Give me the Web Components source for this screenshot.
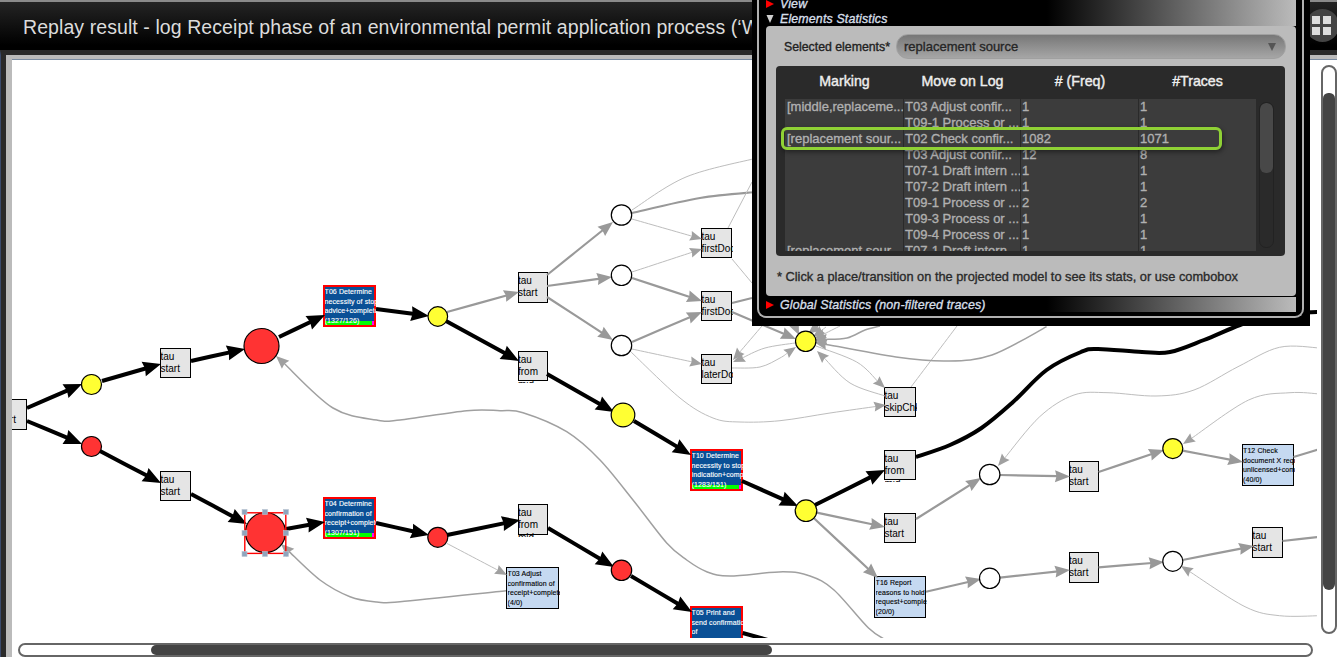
<!DOCTYPE html>
<html lang="en"><head><meta charset="utf-8"><title>Replay result</title>
<style>
html,body{margin:0;height:100%;overflow:hidden;background:#000;font-family:"Liberation Sans",Arial,sans-serif}
</style></head><body>
<replay-app></replay-app>
<script>
const OX=12,OY=60;
/* ---------- diagram data, page coordinates ---------- */
const TRANS=[
 [-4,27,399,430,['tau','start'],'tau'],
 [160,191,348,378,['tau','start'],'tau'],[160,191,471,501,['tau','start'],'tau'],
 [517.5,547.5,272,303,['tau','start'],'tau'],[517.5,547.5,351,381,['tau','from','mid'],'tau'],
 [517.5,547.5,504,535,['tau','from','mid'],'tau'],
 [701,732,228,258,['tau','firstDoc'],'tau'],[701,732,291,321,['tau','firstDoc'],'tau'],[701,732,354,384,['tau','laterDoc'],'tau'],
 [884,916,387,417,['tau','skipChk'],'tau'],[884,916,450,480,['tau','from','mid'],'tau'],[884,916,513,543,['tau','start'],'tau'],
 [1068.5,1099,461,492,['tau','start'],'tau'],[1068.5,1099,552,583,['tau','start'],'tau'],[1252,1283,527,558,['tau','start'],'tau'],
 [323,376,285,327,['T06 Determine','necessity of stopping','advice+complete','(1327/126)'],'hot'],
 [323,376,497,539,['T04 Determine','confirmation of','receipt+complete','(1307/151)'],'hot'],
 [690,743,449,491,['T10 Determine','necessity to stop','indication+complete','(1283/151)'],'hot'],
 [690,743,606,648,['T05 Print and','send confirmation','of','receipt+complete'],'hot'],
 [506,559,567,609,['T03 Adjust','confirmation of','receipt+complete','(4/0)'],'cold'],
 [874,926,576,618,['T16 Report','reasons to hold','request+complete','(20/0)'],'cold'],
 [1241.5,1294,444,486,['T12 Check','document X request','unlicensed+complete','(40/0)'],'cold'],
];
const Y='#ffff33',R='#ff3333',W='#ffffff';
const PLACES=[
 [91.5,384.5,10,Y],[91.5,446.5,10,R],[261.5,346,17.5,R],[265.5,532.5,20,R],
 [437.8,316.5,9.8,Y],[437.8,537.3,10,R],[621.5,215,10.2,W],[621.5,275.3,10.2,W],[621.5,345.5,10.2,W],
 [623,415,11.8,Y],[621.5,570.3,10.2,R],[805.7,341.3,10.2,Y],[806,510.7,10.8,Y],
 [989.7,474.5,10.2,W],[989.7,578.3,10.2,W],[1172.8,448.6,10,Y],[1172.8,561.3,10,W],
];
const B='b',M='m',N='n',C='c';
/* [kind, arrow?, points] */
const EDGES=[
 [B,1,[[27,408],[82,384]]],[B,1,[[27,421],[82,444]]],[B,1,[[102,381],[161,364]]],[B,1,[[100,451],[161,483]]],
 [B,1,[[191,361],[245,349]]],[B,1,[[191,494],[247,524]]],[B,1,[[279,337],[325,315]]],[B,1,[[286,529],[325,522]]],
 [B,1,[[376,309],[429,316]]],[B,1,[[376,523],[429,535]]],[B,1,[[446,321],[519,361]]],[B,1,[[447,535],[520,520]]],
 [B,1,[[547,374],[614,412]]],[B,1,[[548,528],[614,567]]],[B,1,[[634,421],[691,455]]],[B,1,[[631,576],[692,612]]],
 [B,1,[[742,481],[798,506]]],[B,0,[[742.7,633],[775,642]]],[B,1,[[815,505],[885,470]]],
 [B,0,[[916,457],[950,445],[981.5,428],[1012,403],[1046.6,370],[1081,352],[1098,349],[1142,352],[1170,352],[1204,340],[1240,325],[1275,314],[1320,312]]],
 [M,1,[[447,312],[519,292]]],[M,1,[[547,275],[613,222]]],[M,1,[[547,286],[612,277]]],[M,1,[[547,297],[613,340]]],
 [M,0,[[632,213],[700,198],[757,192]]],[N,0,[[632,210],[686,177],[757,158]]],
 [N,1,[[632,219],[702,239]]],[N,1,[[632,272],[702,249]]],[M,1,[[632,278],[702,301]]],[M,1,[[632,342],[702,312]]],[N,1,[[632,349],[702,364]]],
 [N,1,[[630,351],[680,398],[713,418],[740,422],[780,420.7],[830,413],[886,405]]],
 [N,0,[[732,259],[752,283]]],[N,0,[[728,228],[752,182]]],[M,0,[[732,303],[752,298]]],
 [M,1,[[732,312],[796,339]]],[N,1,[[795,343],[765,348],[733,362]]],[N,1,[[732,368],[760,367],[780,358],[796,347]]],
 [N,1,[[762,326],[733,360]]],
 [N,1,[[816,346],[856.7,362],[885,388]]],[N,1,[[885,396],[850,383],[817,351]]],[N,0,[[911,387],[957,326]]],
 [C,1,[[1046.6,326.7],[992,355],[947,361],[896,357],[814,342]]],
 [C,1,[[880,326],[865,330],[847,338],[814,340]]],
 [N,1,[[826,327],[813,337]]],[N,1,[[840,326],[814,339]]],[C,1,[[795,326],[799,335]]],[C,1,[[818,326],[808,334]]],
 [M,1,[[816.8,512.7],[885,527]]],[M,1,[[813.7,518],[878,578]]],[M,1,[[916,519],[981,478]]],[M,1,[[1000,475],[1070,476.5]]],
 [M,1,[[1098.6,472],[1164,450]]],[M,1,[[1182.5,450.7],[1243,462]]],[M,0,[[1293.5,457],[1320,449]]],
 [N,1,[[1320,394],[1290,392.7],[1248.6,400],[1183,444]]],
 [N,1,[[1320,348],[1279.5,347.3],[1238,366.7],[1194,390],[1156,396],[1108,392.7],[1074,395],[1039.7,416.7],[998,466]]],
 [M,1,[[926,591.7],[981,579]]],[M,1,[[1000,577.7],[1070,570]]],[M,1,[[1098.6,567.3],[1164,562]]],[M,1,[[1182.5,560],[1254,546]]],[M,0,[[1282.5,541],[1320,536.7]]],
 [N,1,[[1320,615.7],[1279.5,615.7],[1245,606.7],[1181,566]]],
 [C,1,[[886,640],[868.5,628],[834,590],[810,576],[783,571.7],[730,576],[706.7,571.7],[686.7,560],[666.7,543],[633,500],[600,460],[566.7,431.7],[523,412.7],[500,410.7],[466.7,410.7],[400,420],[376.7,420],[333,408],[276,356]]],
 [C,1,[[506,590.7],[400,601.7],[376.7,602],[350,596.7],[320,580],[281,544]]],
 [N,1,[[446.7,543.3],[507,575]]],
];
const STYLE={b:{w:4,c:'#000',l:18,h:15},m:{w:2.2,c:'#999',l:15,h:12},c:{w:1.5,c:'#a0a0a0',l:13,h:11},n:{w:1,c:'#bdbdbd',l:12,h:10}};

function smooth(p){
 let d=`M${p[0][0]} ${p[0][1]}`;
 for(let i=0;i<p.length-1;i++){
  const a=p[Math.max(i-1,0)],b=p[i],c=p[i+1],e=p[Math.min(i+2,p.length-1)];
  d+=`C${(b[0]+(c[0]-a[0])/6).toFixed(1)} ${(b[1]+(c[1]-a[1])/6).toFixed(1)} ${(c[0]-(e[0]-b[0])/6).toFixed(1)} ${(c[1]-(e[1]-b[1])/6).toFixed(1)} ${c[0]} ${c[1]}`;
 }
 return d;
}
function edgeSvg([k,arrow,pts]){
 const s=STYLE[k],p=pts.map(q=>q.slice());let head='';
 if(arrow){
  const t=p[p.length-1],f=p[p.length-2],dx=t[0]-f[0],dy=t[1]-f[1],L=Math.hypot(dx,dy),ux=dx/L,uy=dy/L;
  const bx=t[0]-ux*s.l,by=t[1]-uy*s.l,hw=s.h/2;
  const gc=k==='n'?'#a0a0a0':s.c;
  head=`<polygon fill="${gc}" points="${t[0]},${t[1]} ${(bx-uy*hw).toFixed(1)},${(by+ux*hw).toFixed(1)} ${(bx+ux*1.5).toFixed(1)},${(by+uy*1.5).toFixed(1)} ${(bx+uy*hw).toFixed(1)},${(by-ux*hw).toFixed(1)}"/>`;
  p[p.length-1]=[+(t[0]-ux*s.l*.8).toFixed(1),+(t[1]-uy*s.l*.8).toFixed(1)];
 }
 return `<path d="${smooth(p)}" fill="none" stroke="${s.c}" stroke-width="${s.w}"/>${head}`;
}

/* ---------- components ---------- */
class ReplayApp extends HTMLElement{
 connectedCallback(){
  this.attachShadow({mode:'open'}).innerHTML=`<style>
  :host{display:flex;flex-direction:column;position:relative;width:1337px;height:657px;overflow:hidden;background:#bbb;box-sizing:border-box}
  .frame{flex:1;min-height:0;display:flex;flex-direction:column;background:#bbb;border-top:5px solid #2a2a2a;border-left:1px solid #3a4a6c}
  .inner{flex:1;min-height:0;display:flex;flex-direction:column;border-left:5px solid #2a2a2a;margin-left:0}
  .band{height:4px;background:#bbb;border-bottom:1px solid #7b8da3;margin-left:6px;margin-right:0;flex:none}
  .work{flex:1;min-height:0;margin-left:6px;background:#fff;display:grid;grid-template-columns:1305px 20px;grid-template-rows:578px 19px}
  petri-canvas{grid-area:1/1}
  v-scroll{grid-area:1/2}
  h-scroll{grid-area:2/1}
  </style>
  <title-bar>Replay result - log Receipt phase of an environmental permit application process (‘WABO’) CoSeLoG project</title-bar>
  <div class="frame"><div class="inner"><div class="band"></div>
   <div class="work"><petri-canvas></petri-canvas><v-scroll></v-scroll><h-scroll></h-scroll></div>
  </div></div>
  <stats-panel></stats-panel>`;
 }
}
class TitleBar extends HTMLElement{
 constructor(){super();this.attachShadow({mode:'open'}).innerHTML=`<style>
  :host{display:flex;align-items:center;justify-content:space-between;flex:none;height:48px;border-top:2px solid #8a8a8a;background:linear-gradient(#242424,#000 90%);color:#dcdcdc;font:19.5px/24px "Liberation Sans",Arial,sans-serif;letter-spacing:.08px;overflow:hidden}
  .t{flex:none;width:729px;white-space:nowrap;overflow:hidden;padding-left:23px;padding-top:1px}
  .ic{flex:none;box-sizing:border-box;width:33px;height:33px;border-radius:50%;background:#444;margin-right:-2px;margin-bottom:1px;padding-right:3px;display:grid;grid-template-columns:8px 8px;grid-auto-rows:8px;gap:3px;justify-content:center;align-content:center}
  .ic i{background:#ddd}
  </style><div class="t"><slot></slot></div><div class="ic"><i></i><i></i><i></i><i></i></div>`;}
}
class PnTransition extends HTMLElement{
 constructor(){super();this.attachShadow({mode:'open'}).innerHTML=`<style>
  :host{display:block;position:absolute;box-sizing:border-box}
  .box{position:absolute;inset:0;box-sizing:border-box;border:1px solid #000;background:#e5e5e5}
  .txt{position:absolute;left:.5px;top:2.5px;right:-1px;bottom:-2px;overflow:hidden;white-space:pre;color:#000;font:10px/12.5px "Liberation Sans",Arial,sans-serif}
  :host([kind=hot]) .box{border:2px solid #f00;background:#0a5096}
  :host([kind=cold]) .box{background:#c5d9f1}
  :host([kind=hot]) .txt,:host([kind=cold]) .txt{left:1.5px;top:2.4px;right:-.5px;letter-spacing:.1px;font:7px/9.4px "Liberation Sans",Arial,sans-serif;-webkit-text-stroke:.12px currentColor}
  :host([kind=hot]) .txt{color:#fff;right:0}
  .bar{display:none;position:absolute;left:2px;right:2px;bottom:2px;height:4px;background:linear-gradient(90deg,#0f0 95%,#f0f 95%)}
  :host([kind=hot][bar]) .bar{display:block}
  </style><div class="box"></div><div class="bar"></div><div class="txt"></div>`;}
 set lines(v){this.shadowRoot.querySelector('.txt').textContent=v.join('\n');}
}
class PetriEdges extends HTMLElement{
 constructor(){super();
  const sel=[[244.5,512],[265,512],[286,512],[244.5,533],[286,533],[244.5,554],[265,554],[286,554]];
  this.attachShadow({mode:'open'}).innerHTML=`<style>:host{display:block;position:absolute;inset:0}svg{display:block;position:absolute;left:0;top:0}</style>
  <svg width="1305" height="578" viewBox="${OX} ${OY} 1305 578">
   ${EDGES.map(edgeSvg).join('')}
   ${PLACES.map(([x,y,r,f])=>`<circle cx="${x}" cy="${y}" r="${r}" fill="${f}" stroke="#000" stroke-width="1.2"/>`).join('')}
   <rect x="244.8" y="512.8" width="41" height="40.6" fill="none" stroke="#f00" stroke-width="1.4"/>
   ${sel.map(([x,y])=>`<rect x="${x-2.5}" y="${y-2.5}" width="5" height="5" fill="#8fa5bd" stroke="#b8c4d0" stroke-width=".6"/>`).join('')}
  </svg>`;}
}
class PetriCanvas extends HTMLElement{
 constructor(){super();this.attachShadow({mode:'open'}).innerHTML=`<style>:host{display:block;position:relative;overflow:hidden;background:#fff;width:1305px;height:578px}</style>`;
  for(const [x0,x1,y0,y1,lines,kind] of TRANS){
   const n=document.createElement('pn-transition');
   n.setAttribute('kind',kind);
   if(kind==='hot'&&lines[0].indexOf('T05')!==0)n.setAttribute('bar','');
   n.style.cssText=`left:${x0-OX}px;top:${y0-OY}px;width:${x1-x0}px;height:${y1-y0}px`;
   n.lines=lines;this.shadowRoot.append(n);
  }
  this.shadowRoot.append(document.createElement('petri-edges'));
 }
}
class VScroll extends HTMLElement{
 constructor(){super();this.attachShadow({mode:'open'}).innerHTML=`<style>
  :host{display:block;box-sizing:border-box;width:16px;height:569px;margin:5px 0 0 4px;border:2px solid #666;border-radius:8px;background:#fff;overflow:hidden;padding-top:26px}
  div{height:497px;background:#444;border-radius:7px 7px 8px 8px}</style><div></div>`;}
}
class HScroll extends HTMLElement{
 constructor(){super();this.attachShadow({mode:'open'}).innerHTML=`<style>
  :host{display:block;box-sizing:border-box;height:14px;margin:5px 4px 0 6px;border:2px solid #666;border-radius:8px;background:#fff;overflow:hidden;padding-left:131px}
  div{width:621px;height:100%;background:#444;border-radius:7px}</style><div></div>`;}
}
class PanelHead extends HTMLElement{
 constructor(){super();this.attachShadow({mode:'open'}).innerHTML=`<style>
  :host{display:flex;align-items:center;flex:none;height:15px;gap:6px;background:linear-gradient(90deg,#000 53%,#bbb 100%);color:#d6dfe8;font:italic 12.4px/15px "Liberation Sans",Arial,sans-serif;letter-spacing:.15px;-webkit-text-stroke:.35px #d6dfe8;white-space:nowrap}
  svg{flex:none;width:8px;height:10px}
  span{padding-top:1px}
  </style><svg viewBox="0 0 8 10"></svg><span><slot></slot></span>`;}
 connectedCallback(){this.shadowRoot.querySelector('svg').innerHTML=this.hasAttribute('open')?'<polygon points="0.5,1 7.5,1 4,9" fill="#d0d0d0"/>':'<polygon points="0,1 8,5 0,9" fill="#f00"/>';}
}
class ComboBox extends HTMLElement{
 constructor(){super();this.attachShadow({mode:'open'}).innerHTML=`<style>
  :host{display:flex;align-items:center;box-sizing:border-box;width:390px;height:25px;padding:0 8px 0 7px;border:1px solid #a0a0a0;border-radius:12px;background:linear-gradient(#777,#a6a6a6);color:#262626;font:13px "Liberation Sans",Arial,sans-serif;-webkit-text-stroke:.35px #262626}
  span{flex:1}svg{width:10px;height:10px}
  </style><span><slot></slot></span><svg viewBox="0 0 10 10"><polygon points="1,1 9,1 5,9" fill="#555"/></svg>`;}
}
const ROWS=[
 ['[middle,replaceme...','T03 Adjust confir...','1','1'],['','T09-1 Process or ...','1','1'],
 ['[replacement sour...','T02 Check confir...','1082','1071'],['','T03 Adjust confir...','12','8'],
 ['','T07-1 Draft intern ...','1','1'],['','T07-2 Draft intern ...','1','1'],['','T09-1 Process or ...','2','2'],
 ['','T09-3 Process or ...','1','1'],['','T09-4 Process or ...','1','1'],['[replacement sour...','T07-1 Draft intern ...','1','1'],
];
class StatsTable extends HTMLElement{
 constructor(){super();
  const cell=r=>r.map(c=>`<div class="c">${c}</div>`).join('');
  this.attachShadow({mode:'open'}).innerHTML=`<style>
  :host{display:block;position:relative;box-sizing:border-box;width:509px;height:190px;margin-left:10px;background:#2a2a2a;border-radius:4px;padding-left:9px}
  .g{display:grid;grid-template-columns:119px 117px 118px 117px;width:471px}
  .h{height:33px;padding-bottom:3px;box-sizing:border-box;align-items:center;color:#eee;font:14.2px "Liberation Sans",Arial,sans-serif;-webkit-text-stroke:.4px #eee;text-align:center}
  .wrap{display:flex;gap:3px}
  .body{width:471px;height:152px;overflow:hidden;background:#3c3c3c}
  .body .g{grid-auto-rows:16px;color:#b0b0b0;font:13px/16px "Liberation Sans",Arial,sans-serif;-webkit-text-stroke:.35px #b0b0b0}
  .c{white-space:nowrap;overflow:hidden;padding-left:1px;border-right:1px solid #2a2a2a;box-sizing:border-box}
  .c:nth-child(4n+1){padding-left:2px}
  .c:nth-child(4n){border-right:0}
  .sb{flex:none;box-sizing:border-box;width:15px;height:146px;margin-top:3px;border:1.5px solid #222;border-radius:7px;overflow:hidden}
  .sb div{height:70px;background:#484848;border-radius:6px}
  .mark{position:absolute;left:5px;top:60.5px;width:441px;height:23.5px;box-sizing:border-box;border:3px solid #8fd135;border-radius:6px;box-shadow:1px 2px 5px rgba(0,0,0,.45)}
  </style>
  <div class="g h"><div>Marking</div><div>Move on Log</div><div># (Freq)</div><div>#Traces</div></div>
  <div class="wrap"><div class="body"><div class="g">${ROWS.map(cell).join('')}</div></div><div class="sb"><div></div></div></div>
  <div class="mark"></div>`;}
}
class StatsPanel extends HTMLElement{
 constructor(){super();this.attachShadow({mode:'open'}).innerHTML=`<style>
  :host{display:block;position:absolute;left:752px;top:-12px;width:558px;height:338px;box-sizing:border-box;padding:4px 6px 8px 5px;background:#000;font-family:"Liberation Sans",Arial,sans-serif}
  .rim{height:100%;box-sizing:border-box;border:2px solid #b0b0b0;border-top-color:#000;border-radius:9px;padding:2px 6px 4px 7px;background:#000;display:flex;flex-direction:column}
  .content{flex:none;height:270px;margin-bottom:1px;background:#bbb;border-radius:4px;padding-top:8px;box-sizing:border-box;display:flex;flex-direction:column}
  .sel{display:flex;align-items:center;justify-content:space-between;padding:0 10px 0 18px;margin-bottom:7px;font:12.3px "Liberation Sans",Arial,sans-serif;color:#222;-webkit-text-stroke:.35px #222}
  .note{margin:14px 0 0 11px;font:12.8px/14px "Liberation Sans",Arial,sans-serif;color:#2a2a2a;-webkit-text-stroke:.35px #2a2a2a;white-space:nowrap}
  </style><div class="rim">
   <panel-head>View</panel-head>
   <panel-head open>Elements Statistics</panel-head>
   <div class="content">
    <div class="sel"><span>Selected elements*</span><combo-box>replacement source</combo-box></div>
    <stats-table></stats-table>
    <div class="note">* Click a place/transition on the projected model to see its stats, or use combobox</div>
   </div>
   <panel-head>Global Statistics (non-filtered traces)</panel-head>
  </div>`;}
}
for(const [n,c] of [['title-bar',TitleBar],['pn-transition',PnTransition],['petri-edges',PetriEdges],['petri-canvas',PetriCanvas],['v-scroll',VScroll],['h-scroll',HScroll],['panel-head',PanelHead],['combo-box',ComboBox],['stats-table',StatsTable],['stats-panel',StatsPanel],['replay-app',ReplayApp]])customElements.define(n,c);
</script>
</body></html>
